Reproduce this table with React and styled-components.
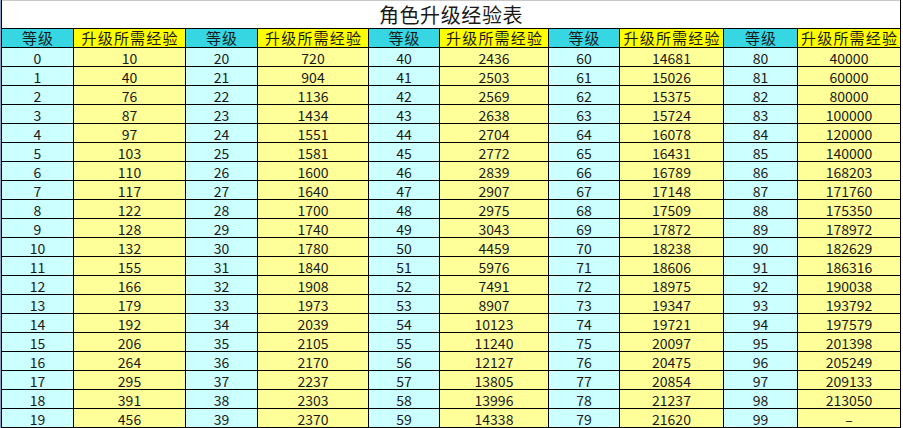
import styled, { createGlobalStyle } from "styled-components";

const GlobalStyle = createGlobalStyle`
  html, body {
    margin: 0;
    padding: 0;
    background: #ffffff;
  }
`;

const levelExp = [
  [10, 40, 76, 87, 97, 103, 110, 117, 122, 128, 132, 155, 166, 179, 192, 206, 264, 295, 391, 456],
  [720, 904, 1136, 1434, 1551, 1581, 1600, 1640, 1700, 1740, 1780, 1840, 1908, 1973, 2039, 2105, 2170, 2237, 2303, 2370],
  [2436, 2503, 2569, 2638, 2704, 2772, 2839, 2907, 2975, 3043, 4459, 5976, 7491, 8907, 10123, 11240, 12127, 13805, 13996, 14338],
  [14681, 15026, 15375, 15724, 16078, 16431, 16789, 17148, 17509, 17872, 18238, 18606, 18975, 19347, 19721, 20097, 20475, 20854, 21237, 21620],
  [40000, 60000, 80000, 100000, 120000, 140000, 168203, 171760, 175350, 178972, 182629, 186316, 190038, 193792, 197579, 201398, 205249, 209133, 213050, "–"],
];

const Frame = styled.div`
  width: 903px;
  height: 428px;
  overflow: hidden;
  border-left: 1px solid #8aa4c8;
  box-sizing: border-box;
`;

const Sheet = styled.div`
  display: grid;
  grid-template-columns: 71px 111px 71px 110px 70px 108px 70px 103px 73px 102px;
  grid-template-rows: 28px 18px repeat(20, 18px);
  gap: 1px;
  width: max-content;
  background: #000000;
  border-left: 1px solid #000000;
  border-right: 1px solid #000000;
  border-bottom: 1px solid #000000;
  font-family: "Noto Sans CJK SC", "Liberation Sans", sans-serif;
  color: #000000;
`;

const Title = styled.div`
  grid-column: 1 / -1;
  background: #ffffff;
  border-top: 1px solid #c8c8c8;
  display: flex;
  align-items: flex-end;
  justify-content: center;
  font-size: 20px;
  letter-spacing: 0.6px;
  line-height: 20px;
  padding-bottom: 3px;
  color: #1a1a1a;
`;

const HeadCell = styled.div`
  background: ${(p) => (p.$exp ? "#ffff00" : "#36d6e2")};
  display: flex;
  align-items: center;
  justify-content: center;
  font-size: 15px;
  letter-spacing: 1.2px;
  text-indent: 1.2px;
  line-height: 18px;
  white-space: nowrap;
  color: #1a1a1a;
`;

const Cell = styled.div`
  background: ${(p) => (p.$exp ? "#ffff99" : "#ccffff")};
  display: flex;
  align-items: center;
  justify-content: center;
  font-size: 14px;
  line-height: 18px;
  padding-top: 1px;
  font-variant-numeric: tabular-nums;
  color: #1a1a1a;
`;

function App() {
  const rows = Array.from({ length: 20 }, (_, r) => r);
  return (
    <Frame>
      <GlobalStyle />
      <Sheet>
        <Title>角色升级经验表</Title>
        {levelExp.map((_, g) => [
          <HeadCell key={`hl${g}`}>等级</HeadCell>,
          <HeadCell key={`he${g}`} $exp>升级所需经验</HeadCell>,
        ])}
        {rows.map((r) =>
          levelExp.map((col, g) => [
            <Cell key={`l${g}-${r}`}>{g * 20 + r}</Cell>,
            <Cell key={`e${g}-${r}`} $exp>{col[r]}</Cell>,
          ])
        )}
      </Sheet>
    </Frame>
  );
}

export default App;
